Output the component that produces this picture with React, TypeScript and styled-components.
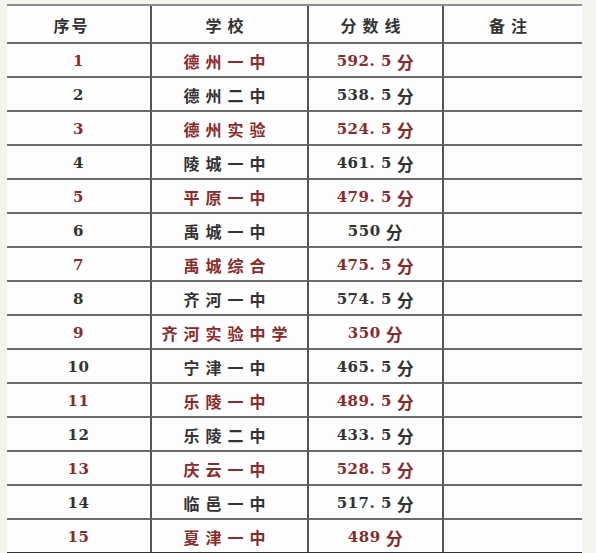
import React from 'react'
import styled, { createGlobalStyle } from 'styled-components'

const GlobalStyle = createGlobalStyle`
  html, body {
    margin: 0;
    padding: 0;
    background: #f4f4ee;
  }
`

const Page = styled.div`
  width: 596px;
  height: 553px;
  padding: 4px 0 0 7px;
  box-sizing: border-box;
  background: #f4f4ee;
`

const Table = styled.div`
  width: 575px;
  display: grid;
  grid-template-columns: 143px 157px 135px 140px;
  grid-auto-rows: 34px;
  grid-template-rows: 36px;
  background: #fdfdfd;
  border-top: 2px solid #8c8c8c;
  border-bottom: 2px solid #333;
  font-family: "DejaVu Serif", "Noto Sans CJK SC", serif;
`

const Cell = styled.div<{ $first?: boolean; $head?: boolean; $red?: boolean }>`
  display: flex;
  align-items: center;
  justify-content: center;
  padding-top: 2px;
  box-sizing: border-box;
  border-top: ${p => (p.$head ? 'none' : '2px solid #6a6a6a')};
  border-left: ${p => (p.$first ? 'none' : '2px solid #555')};
  color: ${p => (p.$red ? '#8a2a2a' : '#333')};
  font-weight: 700;
  font-size: 15px;
  letter-spacing: 0.5px;
  white-space: nowrap;
`

const Name = styled.span`
  font-family: "Noto Sans CJK SC", sans-serif;
  font-size: 16px;
  letter-spacing: 6px;
  margin-left: -4px;
`

const HeadText = styled.span<{ $tight?: boolean }>`
  font-family: "Noto Sans CJK SC", sans-serif;
  font-size: 16px;
  color: #333;
  letter-spacing: ${p => (p.$tight ? '2px' : '6px')};
  margin-left: ${p => (p.$tight ? '-14px' : '-4px')};
`

const Unit = styled.span`
  font-family: "Noto Sans CJK SC", sans-serif;
  font-size: 17px;
  margin-left: 5px;
`

const rows: [string, string, string][] = [
  ['1', '德州一中', '592. 5'],
  ['2', '德州二中', '538. 5'],
  ['3', '德州实验', '524. 5'],
  ['4', '陵城一中', '461. 5'],
  ['5', '平原一中', '479. 5'],
  ['6', '禹城一中', '550'],
  ['7', '禹城综合', '475. 5'],
  ['8', '齐河一中', '574. 5'],
  ['9', '齐河实验中学', '350'],
  ['10', '宁津一中', '465. 5'],
  ['11', '乐陵一中', '489. 5'],
  ['12', '乐陵二中', '433. 5'],
  ['13', '庆云一中', '528. 5'],
  ['14', '临邑一中', '517. 5'],
  ['15', '夏津一中', '489'],
]

export default function App() {
  return (
    <>
      <GlobalStyle />
      <Page>
        <Table>
          <Cell $first $head><HeadText $tight>序号</HeadText></Cell>
          <Cell $head><HeadText>学校</HeadText></Cell>
          <Cell $head><HeadText>分数线</HeadText></Cell>
          <Cell $head><HeadText>备注</HeadText></Cell>
          {rows.map(([no, school, score], i) => {
            const red = i % 2 === 0
            return (
              <React.Fragment key={no}>
                <Cell $first $red={red}>{no}</Cell>
                <Cell $red={red}><Name>{school}</Name></Cell>
                <Cell $red={red}>{score}<Unit>分</Unit></Cell>
                <Cell />
              </React.Fragment>
            )
          })}
        </Table>
      </Page>
    </>
  )
}
